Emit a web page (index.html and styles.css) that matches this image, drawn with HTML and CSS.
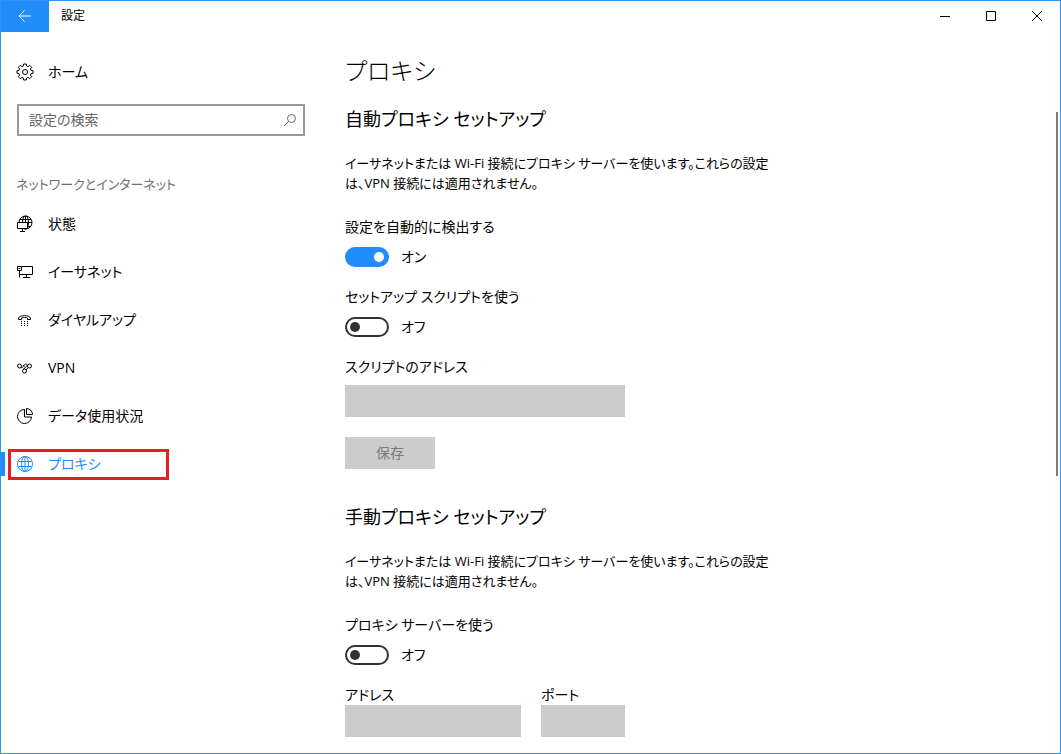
FILE: index.html
```html
<!DOCTYPE html>
<html lang="ja">

<head>
  <meta charset="UTF-8">
  <meta name="viewport" content="width=device-width, initial-scale=1.0">
  <title>設定</title>
  <link rel="stylesheet" href="styles.css">
</head>

<body>
  <div class="window">
    <header class="titlebar">
      <button class="back" aria-label="戻る">
        <svg width="14" height="12" viewBox="0 0 14 12"><path d="M6.500 .5L1 6l5.500 5.500M1 6h12" /></svg>
      </button>
      <span class="caption">設定</span>
      <div class="controls">
        <button aria-label="最小化"><svg width="10" height="10" viewBox="0 0 10 10"><path d="M0 5.500h10" /></svg></button>
        <button aria-label="最大化"><svg width="10" height="10" viewBox="0 0 10 10"><path d="M.5 .5h9v9h-9z" /></svg></button>
        <button aria-label="閉じる"><svg width="10" height="10" viewBox="0 0 10 10"><path d="M0 0l10 10M10 0L0 10" /></svg></button>
      </div>
    </header>

    <div class="content">
      <aside class="sidebar">
        <a class="item" href="#">
          <svg width="18" height="18" viewBox="0 0 18 18"><path d="M7.700 1h2.600l.4 2 1.300.6 1.800-1.200 1.800 1.800-1.200 1.800.6 1.300 2 .4v2.600l-2 .4-.6 1.300 1.200 1.800-1.800 1.800-1.800-1.200-1.300.6-.4 2H7.700l-.4-2-1.300-.6-1.800 1.200-1.800-1.800L3.600 12 3 10.700l-2-.4V7.700l2-.4L3.600 6 2.400 4.200l1.800-1.800L6 3.600 7.300 3z" /><circle cx="9" cy="9" r="2.500" /></svg>
          <span>ホーム</span>
        </a>

        <form class="search">
          <input type="text" placeholder="設定の検索" aria-label="設定の検索">
          <button type="button" aria-label="検索">
            <svg width="14" height="14" viewBox="0 0 14 14"><circle cx="8.500" cy="5.500" r="4" /><path d="M5.600 8.400L1 13" /></svg>
          </button>
        </form>

        <h2 class="group">ネットワークとインターネット</h2>
        <nav>
          <a class="item" href="#">
            <svg width="18" height="18" viewBox="0 0 18 18"><circle cx="9.500" cy="7.500" r="6.500" /><ellipse cx="9.500" cy="7.500" rx="3" ry="6.500" /><path d="M9.500 1v7M4 4.500h11M3 7.500h13M4 11.500h11" /><path class="solid" d="M1.500 7.500h10v6h-10z" /><path d="M6.500 13.500v3M4 16.500h5" /></svg>
            <span>状態</span>
          </a>
          <a class="item" href="#">
            <svg width="18" height="18" viewBox="0 0 18 18"><path d="M5.500 3.500h11v8h-13M1.500 3.500h4v4h-4zM3.500 7.500v7M2.500 5.500h2M10.500 11.500v3M7 14.500h7" /></svg>
            <span>イーサネット</span>
          </a>
          <a class="item" href="#">
            <svg width="18" height="18" viewBox="0 0 18 18"><path d="M2.500 8.500V7C4 3.800 13 3.800 14.500 7v1.500h-3V7c-1.500-.7-4.500-.7-6 0v1.500z" /><path class="dots" d="M5 10.500h7M5 12.500h7M5 14.500h7" /></svg>
            <span>ダイヤルアップ</span>
          </a>
          <a class="item" href="#">
            <svg width="18" height="18" viewBox="0 0 18 18"><circle cx="3.500" cy="7" r="2" /><circle cx="13.500" cy="7" r="2" /><circle cx="8.500" cy="12" r="2" /><path d="M5 8.500C7 9.500 8 5 9.500 5s2 1.500 1 2.500L7 10.500M7 6l1.500 1.500M10 11L12 8.700" /></svg>
            <span>VPN</span>
          </a>
          <a class="item" href="#">
            <svg width="18" height="18" viewBox="0 0 18 18"><path d="M8.500 2.500a7 7 0 1 0 7 7.500h-7z" /><path d="M10.500 1.500v6h6a6 6 0 0 0-6-6z" /></svg>
            <span>データ使用状況</span>
          </a>
          <a class="item active" href="#" aria-current="page">
            <svg width="18" height="18" viewBox="0 0 18 18"><circle cx="9" cy="9" r="7.500" /><ellipse cx="9" cy="9" rx="3.500" ry="7.500" /><path d="M2.500 6.500h13M2.500 11.500h13M9 1.500v15" /></svg>
            <span>プロキシ</span>
          </a>
        </nav>
      </aside>

      <main class="main">
        <h1>プロキシ</h1>

        <section>
          <h2>自動プロキシ セットアップ</h2>
          <p>イーサネットまたは Wi-Fi 接続にプロキシ サーバーを使います。これらの設定<br>は、VPN 接続には適用されません。</p>
          <div class="field">
            <label for="detect">設定を自動的に検出する</label>
            <div class="switch"><input type="checkbox" id="detect" checked><span>オン</span></div>
          </div>
          <div class="field">
            <label for="script">セットアップ スクリプトを使う</label>
            <div class="switch"><input type="checkbox" id="script"><span>オフ</span></div>
          </div>
          <div class="field script">
            <label for="url">スクリプトのアドレス</label>
            <input class="box" type="text" id="url" disabled>
          </div>
          <button class="save" disabled>保存</button>
        </section>

        <section>
          <h2>手動プロキシ セットアップ</h2>
          <p>イーサネットまたは Wi-Fi 接続にプロキシ サーバーを使います。これらの設定<br>は、VPN 接続には適用されません。</p>
          <div class="field">
            <label for="manual">プロキシ サーバーを使う</label>
            <div class="switch"><input type="checkbox" id="manual"><span>オフ</span></div>
          </div>
          <div class="server">
            <div class="address">
              <label for="address">アドレス</label>
              <input class="box" type="text" id="address" disabled>
            </div>
            <div class="port">
              <label for="port">ポート</label>
              <input class="box" type="text" id="port" disabled>
            </div>
          </div>
        </section>
      </main>
    </div>
    <div class="scrollbar"></div>
  </div>
</body>

</html>
```
FILE: styles.css
```css
*, *::before, *::after {
  box-sizing: border-box;
}

body {
  margin: 0;
  background-color: #fff;
  color: #000;
  font-family: "Open Sans", "Noto Sans CJK JP", sans-serif;
  font-size: 14px;
  line-height: 20px;
  font-feature-settings: "palt";
}

button, input {
  font: inherit;
  font-feature-settings: inherit;
  color: inherit;
  margin: 0;
  padding: 0;
  border: none;
  border-radius: 0;
  background-color: transparent;
}

h1, h2, p {
  margin: 0;
  font-weight: normal;
}

svg {
  display: block;
  flex: none;
  fill: none;
  stroke: currentColor;
  stroke-width: 1;
}

.window {
  position: relative;
  min-height: 100vh;
  border: 1px solid #3393f3;
}

.titlebar {
  display: flex;
  height: 31px;
}

.back {
  display: flex;
  justify-content: center;
  align-items: center;
  width: 48px;
  padding-bottom: 2px;
  background-color: #218cfb;
  color: #fff;
}

.caption {
  flex: 1;
  padding: 5px 12px;
  font-size: 12px;
}

.controls {
  display: flex;
}

.controls button {
  display: flex;
  justify-content: center;
  align-items: center;
  width: 46px;
  padding-bottom: 2px;
}

.content {
  display: flex;
}

.sidebar {
  flex: none;
  width: 304px;
  padding-top: 16px;
}

.item {
  position: relative;
  display: flex;
  align-items: center;
  gap: 14px;
  height: 48px;
  padding-left: 15px;
  color: #000;
  text-decoration: none;
}

.dots {
  stroke-dasharray: 1 2;
}

.solid {
  fill: #fff;
}

.search {
  display: flex;
  height: 32px;
  margin: 8px 0 0 16px;
  border: 2px solid #999;
}

.search input {
  flex: 1;
  min-width: 0;
  padding-left: 10px;
  outline: none;
}

.search input::placeholder {
  color: #666;
  opacity: 1;
}

.search button {
  display: flex;
  align-items: center;
  padding: 0 6px;
  color: #666;
}

.group {
  margin: 38px 0 6px 15px;
  color: #707070;
  font-size: 13px;
}

.item.active {
  color: #218cfb;
}

.active::before {
  content: "";
  position: absolute;
  left: 0;
  top: 12px;
  width: 4px;
  height: 24px;
  background-color: #218cfb;
}

/* red frame around the selected page */
.active::after {
  content: "";
  position: absolute;
  left: 7px;
  top: 9px;
  width: 161px;
  height: 31px;
  border: 3px solid #ed1c24;
}

.main {
  flex: 1;
  padding: 19px 40px 16px;
}

h1 {
  font-size: 24px;
  font-weight: 300;
  line-height: 40px;
}

.main h2 {
  margin: 12px 0 18px;
  font-size: 18px;
  line-height: 32px;
}

.main p {
  font-size: 13px;
}

.field {
  margin-top: 20px;
}

.main p + .field {
  margin-top: 24px;
}

label {
  display: block;
}

.switch {
  display: flex;
  align-items: center;
  gap: 12px;
  margin-top: 10px;
}

.switch input {
  appearance: none;
  display: flex;
  align-items: center;
  width: 44px;
  height: 20px;
  padding: 0 3px;
  border: 2px solid #333;
  border-radius: 10px;
}

.switch input::before {
  content: "";
  width: 10px;
  height: 10px;
  border-radius: 50%;
  background-color: #333;
}

.switch input:checked {
  justify-content: flex-end;
  border-color: #218cfb;
  background-color: #218cfb;
}

.switch input:checked::before {
  background-color: #fff;
}

.box {
  display: block;
  width: 100%;
  height: 32px;
  padding: 0 10px;
  background-color: #ccc;
}

.script {
  max-width: 280px;
}

.script .box {
  margin-top: 8px;
}

.save {
  display: block;
  width: 90px;
  height: 32px;
  margin: 20px 0 32px;
  background-color: #ccc;
  color: #7a7a7a;
}

.server {
  display: flex;
  gap: 20px;
  max-width: 280px;
  margin-top: 20px;
}

.address {
  flex: 1;
}

.port {
  width: 84px;
}

.scrollbar {
  position: absolute;
  right: 2px;
  top: 111px;
  width: 2px;
  height: 364px;
  background-color: #7a7a7a;
}
```
